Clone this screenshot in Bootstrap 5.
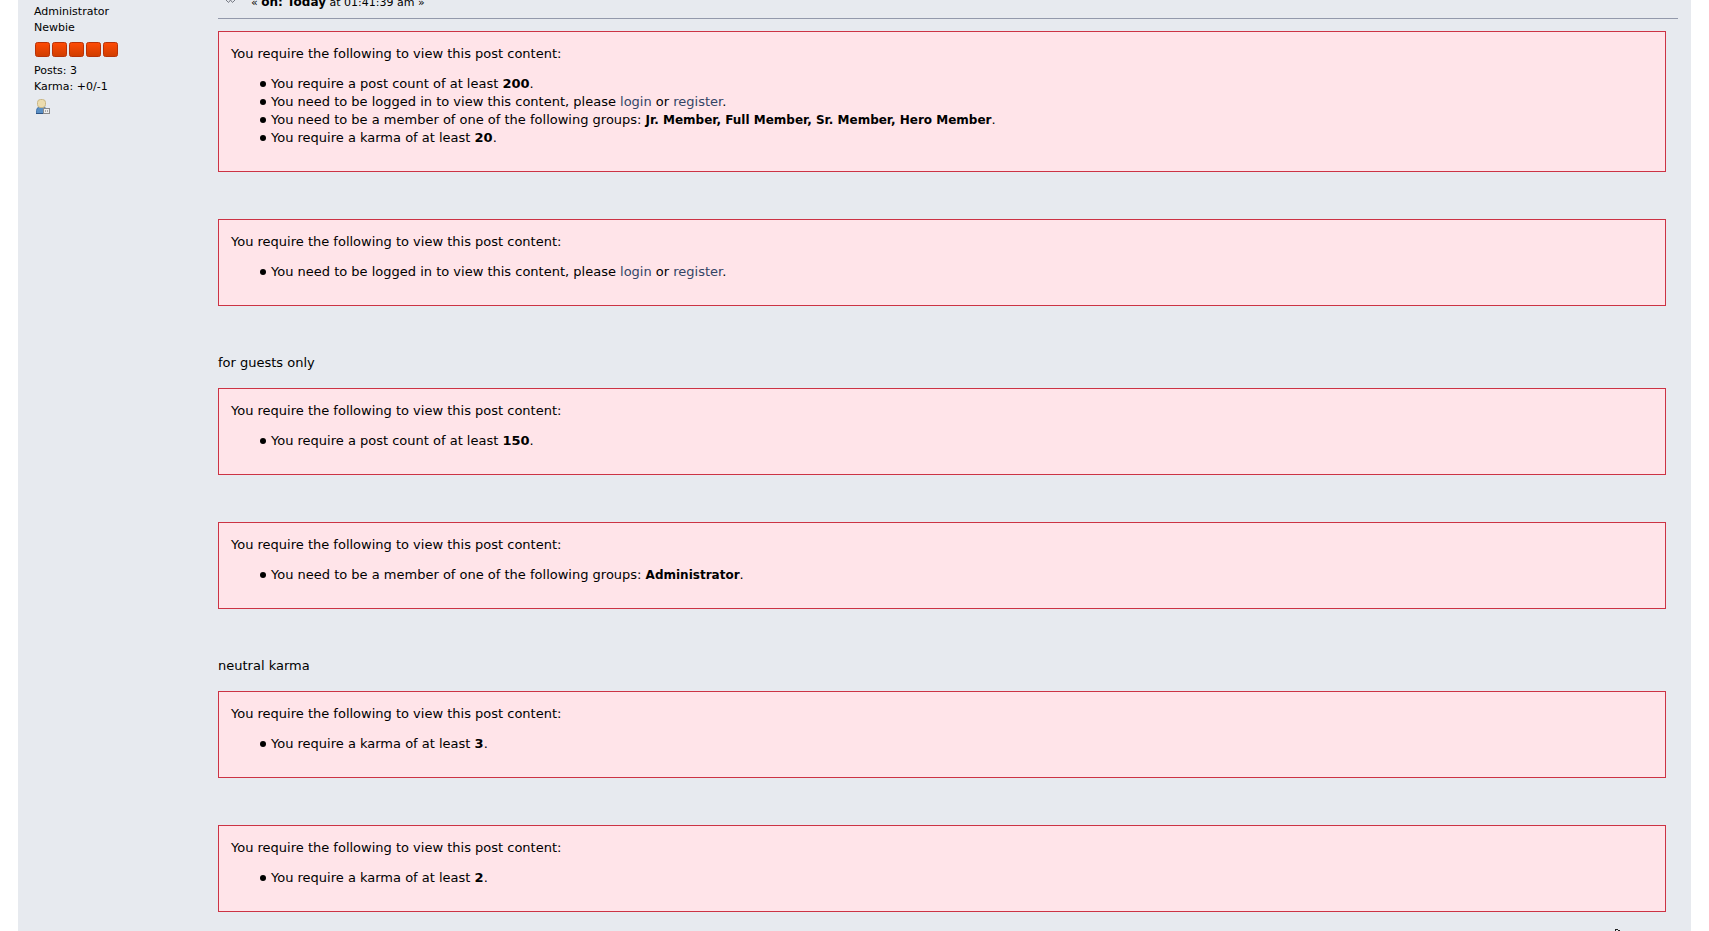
<!DOCTYPE html>
<html lang="en">
<head>
<meta charset="utf-8">
<meta name="viewport" content="width=device-width, initial-scale=1">
<title>Topic</title>
<link href="https://cdn.jsdelivr.net/npm/bootstrap@5.3.0/dist/css/bootstrap.min.css" rel="stylesheet">
<style>
body { font: 13px/18px "DejaVu Sans", Verdana, sans-serif; color: #000; background: #fff; padding: 0 18px; }
.post { background: #e7eaef; padding-right: 13px; }
.poster { width: 200px; padding: 4px 16px 0; font-size: 11px; line-height: 16px; }
.stars { gap: 2px; padding: 6px 1px; }
.stars svg { width: 15px; height: 15px; }
.keyinfo { height: 19px; border-bottom: 1px solid #9399ab; padding: 0 0 7px 8px; gap: 16px; font-size: 11px; line-height: 16px; }
.keyinfo strong, .groups { font-size: 12px; }
.post-body { padding: 12px 12px 12px 0; }
.notice { background: #ffe4e9; border: 1px solid #cc3344; padding: 13px 12px 24px; margin-bottom: 47px; }
.notice ul { padding-left: 40px; margin: 12px 0 0; list-style: none; }
.notice li::before { content: ""; display: inline-block; width: 6px; height: 6px; border-radius: 50%; background: #000; margin: 0 5px 1px -11px; }
.remark { line-height: 20px; margin: 0 0 15px; }
a { color: #334466; text-decoration: none; }
.pointer { position: absolute; right: 88px; bottom: 0; }
</style>
</head>
<body>
<main class="post d-flex min-vh-100">
  <aside class="poster flex-shrink-0">
    <div>Administrator</div>
    <div>Newbie</div>
    <div class="stars d-flex" role="img" aria-label="5 stars">
      <svg viewBox="0 0 15 15"><defs><linearGradient id="g" x2="0" y2="1"><stop stop-color="#ff4b05"/><stop offset="1" stop-color="#cf3d00"/></linearGradient></defs><rect x=".5" y=".5" width="14" height="14" rx="2" fill="url(#g)" stroke="#b83208"/></svg>
      <svg viewBox="0 0 15 15"><rect x=".5" y=".5" width="14" height="14" rx="2" fill="url(#g)" stroke="#b83208"/></svg>
      <svg viewBox="0 0 15 15"><rect x=".5" y=".5" width="14" height="14" rx="2" fill="url(#g)" stroke="#b83208"/></svg>
      <svg viewBox="0 0 15 15"><rect x=".5" y=".5" width="14" height="14" rx="2" fill="url(#g)" stroke="#b83208"/></svg>
      <svg viewBox="0 0 15 15"><rect x=".5" y=".5" width="14" height="14" rx="2" fill="url(#g)" stroke="#b83208"/></svg>
    </div>
    <div>Posts: 3</div>
    <div>Karma: +0/-1</div>
    <a href="#" class="d-block pt-1" aria-label="View profile"><svg class="d-block" width="16" height="16" viewBox="0 0 16 16"><path d="M2.500 14.500v-3q0-3.500 4-3.500h2q4 0 4 3.500v3z" fill="#5a8fc4" stroke="#4677ac"/><path d="M2 14.500h8" stroke="#2c5384"/><rect x="3.500" y=".5" width="8" height="8" rx="3" fill="#ecdcae" stroke="#c9b685"/><rect x="9.500" y="9.500" width="6" height="5" fill="#eee" stroke="#8a8a8a"/><path d="M11.500 11v2m2-2v2" stroke="#aaa"/></svg></a>
  </aside>
  <section class="flex-grow-1">
    <header class="keyinfo d-flex align-items-end">
      <svg width="9" height="12" viewBox="0 0 9 12" fill="none" stroke="#777b85"><path d="M0 1l2.500 2.500L4.500 1l2 2.500L9 1"/></svg>
      <div>« <strong>on: Today</strong> at 01:41:39 am »</div>
    </header>
    <div class="post-body">
      <div class="notice">You require the following to view this post content:
        <ul>
          <li>You require a post count of at least <strong>200</strong>.</li>
          <li>You need to be logged in to view this content, please <a href="#">login</a> or <a href="#">register</a>.</li>
          <li>You need to be a member of one of the following groups: <strong class="groups">Jr. Member, Full Member, Sr. Member, Hero Member</strong>.</li>
          <li>You require a karma of at least <strong>20</strong>.</li>
        </ul>
      </div>
      <div class="notice">You require the following to view this post content:
        <ul><li>You need to be logged in to view this content, please <a href="#">login</a> or <a href="#">register</a>.</li></ul>
      </div>
      <p class="remark">for guests only</p>
      <div class="notice">You require the following to view this post content:
        <ul><li>You require a post count of at least <strong>150</strong>.</li></ul>
      </div>
      <div class="notice">You require the following to view this post content:
        <ul><li>You need to be a member of one of the following groups: <strong class="groups">Administrator</strong>.</li></ul>
      </div>
      <p class="remark">neutral karma</p>
      <div class="notice">You require the following to view this post content:
        <ul><li>You require a karma of at least <strong>3</strong>.</li></ul>
      </div>
      <div class="notice mb-0">You require the following to view this post content:
        <ul><li>You require a karma of at least <strong>2</strong>.</li></ul>
      </div>
    </div>
  </section>
</main>
<svg class="pointer" width="6" height="2" viewBox="0 0 6 2" aria-hidden="true"><path d="M0 0h3v1h2v1H3V1H1v1H0z" fill="#222"/></svg>
<script src="https://cdn.jsdelivr.net/npm/bootstrap@5.3.0/dist/js/bootstrap.bundle.min.js"></script>
</body>
</html>
